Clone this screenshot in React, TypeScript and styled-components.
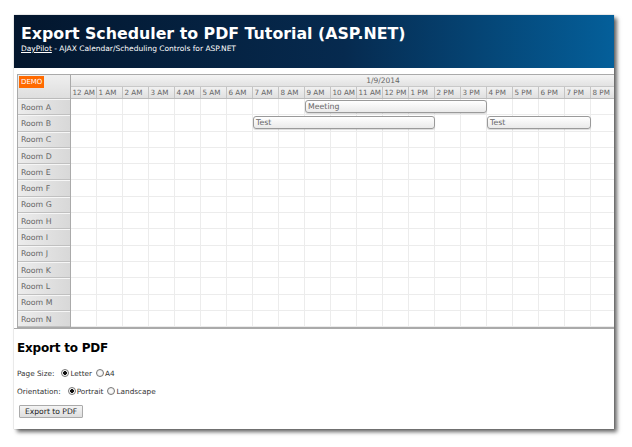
import React from 'react';
import styled, { createGlobalStyle } from 'styled-components';

// ─────────────────────────────────────────────────────────────
// CONSTANTS
// ─────────────────────────────────────────────────────────────

const HOUR_WIDTH = 26;
const ROW_HEIGHT = 16.3;
const VISIBLE_HOURS = 21;

const HOURS = Array.from({ length: VISIBLE_HOURS }, (_, i) => {
  const h = i % 12 === 0 ? 12 : i % 12;
  return `${h} ${i < 12 ? 'AM' : 'PM'}`;
});

const ROOMS = 'ABCDEFGHIJKLMN'.split('').map(l => `Room ${l}`);

interface EventItem {
  id: string;
  row: number;
  start: number;
  end: number;
  text: string;
}

const EVENTS: EventItem[] = [
  { id: 'e1', row: 0, start: 9, end: 16, text: 'Meeting' },
  { id: 'e2', row: 1, start: 7, end: 14, text: 'Test' },
  { id: 'e3', row: 1, start: 16, end: 20, text: 'Test' },
];

// ─────────────────────────────────────────────────────────────
// STYLED COMPONENTS
// ─────────────────────────────────────────────────────────────

const GlobalStyle = createGlobalStyle`
  html, body {
    margin: 0;
    padding: 0;
    background: #fff;
  }
  body {
    font-family: "DejaVu Sans", Verdana, sans-serif;
  }
`;

const Page = styled.div`
  padding: 15px 0 0 14px;
  width: 632px;
  height: 447px;
  box-sizing: border-box;
`;

const Window = styled.div`
  width: 600px;
  height: 414px;
  background: #fff;
  display: flex;
  flex-direction: column;
  overflow: hidden;
  box-shadow: 0 0 1px rgba(0, 0, 0, 0.35), 3px 3px 4px rgba(0, 0, 0, 0.6);
`;

const Header = styled.div`
  height: 53px;
  flex: none;
  box-sizing: border-box;
  padding: 10px 0 0 7px;
  background: linear-gradient(to right, #03162d 0%, #062a4f 55%, #045f9a 100%);
  color: #fff;
`;

const Title = styled.div`
  font-weight: bold;
  font-size: 15.8px;
  line-height: 18px;
  white-space: nowrap;
`;

const Subtitle = styled.div`
  font-size: 7.5px;
  line-height: 9px;
  margin-top: 1px;
  white-space: nowrap;

  a {
    color: #fff;
    text-decoration: underline;
  }
`;

const Scheduler = styled.div`
  margin: 6px 0 0 3px;
  border: 1px solid #aaa;
  border-right: none;
  display: flex;
  overflow: hidden;
  flex: none;
  font-size: 7.5px;
  color: #666;
`;

const RowHeaderColumn = styled.div`
  width: 53px;
  flex: none;
  display: flex;
  flex-direction: column;
  border-right: 1px solid #aaa;
  box-sizing: border-box;
`;

const Corner = styled.div`
  height: 24px;
  box-sizing: border-box;
  padding: 1px 0 0 1px;
  background: linear-gradient(to bottom, #efefef, #dedede);
  border-bottom: 1px solid #bbb;
`;

const DemoBadge = styled.span`
  display: inline-block;
  background: #ff6a00;
  color: #fff;
  font-size: 7px;
  line-height: 12px;
  padding: 0 2px;
`;

const RowHeader = styled.div`
  height: ${ROW_HEIGHT}px;
  box-sizing: border-box;
  padding-left: 3px;
  display: flex;
  align-items: center;
  background: linear-gradient(to right, #ececec, #d8d8d8);
  border-bottom: 1px solid #c0c0c0;
  border-top: 1px solid #f6f6f6;
  color: #666;
  font-size: 7.8px;
  white-space: nowrap;
`;

const Timeline = styled.div`
  flex: none;
  width: ${HOUR_WIDTH * 24}px;
  display: flex;
  flex-direction: column;
`;

const DateRow = styled.div`
  height: 12px;
  line-height: 12px;
  text-align: center;
  box-sizing: border-box;
  background: linear-gradient(to bottom, #f4f4f4, #e2e2e2);
  border-bottom: 1px solid #c8c8c8;
`;

const HourRow = styled.div`
  display: flex;
  height: 12px;
  box-sizing: border-box;
  border-bottom: 1px solid #bbb;
  background: linear-gradient(to bottom, #f1f1f1, #e0e0e0);
`;

const HourCell = styled.div`
  width: ${HOUR_WIDTH}px;
  flex: none;
  box-sizing: border-box;
  padding-left: 1.5px;
  font-size: 7.2px;
  line-height: 11px;
  white-space: nowrap;
  overflow: hidden;
  border-right: 1px solid #c4c4c4;
`;

const GridRow = styled.div`
  position: relative;
  display: flex;
  height: ${ROW_HEIGHT}px;
  box-sizing: border-box;
  border-bottom: 1px solid #ececec;
`;

const GridCell = styled.div`
  width: ${HOUR_WIDTH}px;
  flex: none;
  box-sizing: border-box;
  border-right: 1px solid #ececec;
`;

const EventBox = styled.div`
  position: absolute;
  top: 1px;
  height: 13px;
  box-sizing: border-box;
  padding-left: 2px;
  line-height: 11px;
  font-size: 7.8px;
  border: 1px solid #9a9a9a;
  border-radius: 3px;
  background: linear-gradient(to bottom, #ffffff, #eaeaea);
  box-shadow: 0 1px 1px rgba(0, 0, 0, 0.15);
  color: #666;
  white-space: nowrap;
  overflow: hidden;
`;

const Divider = styled.div`
  border-top: 1px solid #aaa;
  flex: none;
`;

const Controls = styled.div`
  padding-left: 3px;
  color: #333;
`;

const SectionTitle = styled.h2`
  margin: 11px 0 0 0;
  font-size: 12px;
  line-height: 16px;
  letter-spacing: -0.2px;
  color: #000;
`;

const OptionRow = styled.div<{ gap: number }>`
  display: flex;
  align-items: center;
  height: 12px;
  margin-top: ${p => p.gap}px;
  font-size: 7.3px;
  color: #333;
  white-space: nowrap;
`;

const OptionLabel = styled.span`
  margin-right: 6px;
`;

const Radio = styled.input.attrs({ type: 'radio' })`
  appearance: none;
  margin: 0 1px 0 1px;
  width: 8px;
  height: 8px;
  border-radius: 50%;
  border: 1px solid #777;
  box-sizing: border-box;
  background: radial-gradient(circle, #fff 0, #e8e8e8 100%);

  &:checked {
    background: radial-gradient(circle, #111 0, #111 1.6px, #fff 2.2px, #eee 100%);
  }
`;

const RadioText = styled.span`
  margin-right: 3px;
`;

const ExportButton = styled.button`
  margin: 8px 0 0 2px;
  height: 13px;
  padding: 0 5px;
  font-family: "DejaVu Sans", Verdana, sans-serif;
  font-size: 7.6px;
  line-height: 11px;
  color: #222;
  background: linear-gradient(to bottom, #f4f4f4, #dedede);
  border: 1px solid #aaa;
  border-radius: 1px;
  display: block;
`;

// ─────────────────────────────────────────────────────────────
// COMPONENT
// ─────────────────────────────────────────────────────────────

const App: React.FC = () => {
  return (
    <>
      <GlobalStyle />
      <Page>
        <Window>
          <Header>
            <Title>Export Scheduler to PDF Tutorial (ASP.NET)</Title>
            <Subtitle>
              <a href="#">DayPilot</a> - AJAX Calendar/Scheduling Controls for ASP.NET
            </Subtitle>
          </Header>

          {/* Scheduler */}
          <Scheduler>
            <RowHeaderColumn>
              <Corner>
                <DemoBadge>DEMO</DemoBadge>
              </Corner>
              {ROOMS.map(room => (
                <RowHeader key={room}>{room}</RowHeader>
              ))}
            </RowHeaderColumn>

            <Timeline>
              <DateRow>1/9/2014</DateRow>
              <HourRow>
                {HOURS.map(h => (
                  <HourCell key={h}>{h}</HourCell>
                ))}
              </HourRow>
              {ROOMS.map((room, r) => (
                <GridRow key={room}>
                  {HOURS.map(h => (
                    <GridCell key={h} />
                  ))}
                  {EVENTS.filter(e => e.row === r).map(e => (
                    <EventBox
                      key={e.id}
                      style={{
                        left: e.start * HOUR_WIDTH,
                        width: (e.end - e.start) * HOUR_WIDTH,
                      }}
                    >
                      {e.text}
                    </EventBox>
                  ))}
                </GridRow>
              ))}
            </Timeline>
          </Scheduler>
          <Divider />

          {/* Export options */}
          <Controls>
            <SectionTitle>Export to PDF</SectionTitle>
            <OptionRow gap={11}>
              <OptionLabel>Page Size:</OptionLabel>
              <Radio name="size" defaultChecked />
              <RadioText>Letter</RadioText>
              <Radio name="size" />
              <RadioText>A4</RadioText>
            </OptionRow>
            <OptionRow gap={6}>
              <OptionLabel>Orientation:</OptionLabel>
              <Radio name="orientation" defaultChecked />
              <RadioText>Portrait</RadioText>
              <Radio name="orientation" />
              <RadioText>Landscape</RadioText>
            </OptionRow>
            <ExportButton>Export to PDF</ExportButton>
          </Controls>
        </Window>
      </Page>
    </>
  );
};

export default App;
